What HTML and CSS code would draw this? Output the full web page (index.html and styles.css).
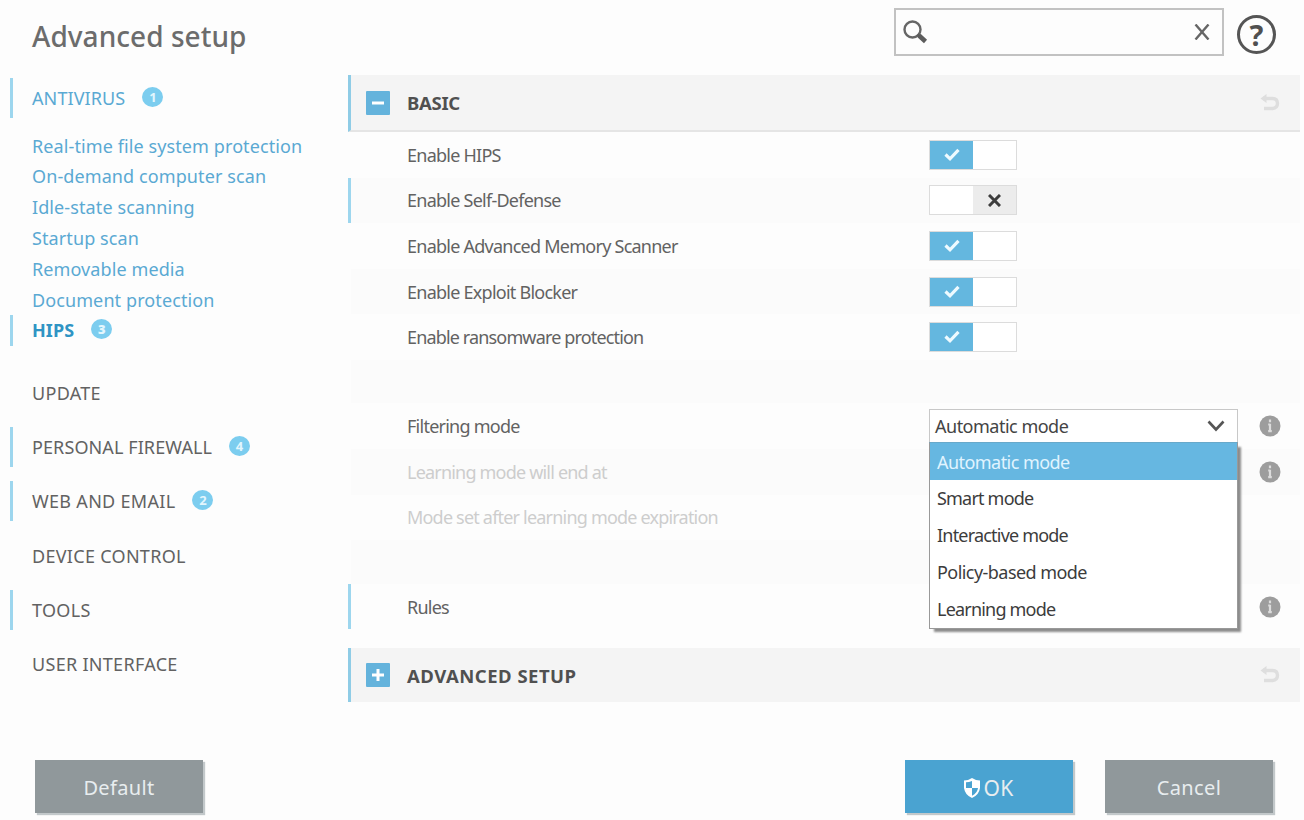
FILE: index.html
```html
<!DOCTYPE html>
<html lang="en">
<head>
<meta charset="utf-8">
<title>Advanced setup</title>
<link rel="stylesheet" href="styles.css">
</head>
<body>
<svg width="0" height="0" class="defs">
  <symbol id="check" viewBox="0 0 16 14"><path d="M1.500 6.500 6 10.800 14.500 1.800" fill="none" stroke="#eefaff" stroke-width="3.200"/></symbol>
  <symbol id="undo" viewBox="0 0 20 18"><path d="M3 4.500H12.500Q17.500 4.500 17.500 9.300T12.500 14.500H4" fill="none" stroke="#dedede" stroke-width="3.400"/><path d="M0.500 4.500 6.500 0V9Z" fill="#dedede"/></symbol>
  <symbol id="info" viewBox="0 0 22 22"><circle cx="11" cy="11" r="10.500" fill="#9d9d9d"/><path d="M11 4.500v2.800M11 8.800v7.500M9.200 9.500h1.800M9.200 16.200h3.600" stroke="#dcdcdc" stroke-width="2.200" fill="none"/></symbol>
</svg>
<div class="window">
  <header class="top">
    <h1 class="title">Advanced setup</h1>
    <div class="search">
      <svg width="26" height="26" viewBox="0 0 26 26"><circle cx="10.500" cy="10.500" r="8" fill="none" stroke="#666" stroke-width="2.400"/><path d="M15.500 15.500 18 18" stroke="#5c5c5c" stroke-width="3"/><path d="M17 16.500 23.500 22.500" stroke="#5c5c5c" stroke-width="4.600"/></svg>
      <svg width="16" height="16" viewBox="0 0 16 16"><path d="M1.500 0.500 14.500 15.500M14.500 0.500 1.500 15.500" stroke="#666" stroke-width="2.400"/></svg>
    </div>
    <div class="help"><span>?</span></div>
  </header>
  <div class="body">
    <nav class="side">
      <div class="cat tight active marked"><span>ANTIVIRUS</span><b class="badge">1</b></div>
      <div class="subs">
        <div class="sub">Real-time file system protection</div>
        <div class="sub">On-demand computer scan</div>
        <div class="sub">Idle-state scanning</div>
        <div class="sub">Startup scan</div>
        <div class="sub">Removable media</div>
        <div class="sub">Document protection</div>
        <div class="sub current marked"><span>HIPS</span><b class="badge">3</b></div>
      </div>
      <div class="cat">UPDATE</div>
      <div class="cat tight marked"><span>PERSONAL FIREWALL</span><b class="badge">4</b></div>
      <div class="cat marked"><span>WEB AND EMAIL</span><b class="badge">2</b></div>
      <div class="cat">DEVICE CONTROL</div>
      <div class="cat marked">TOOLS</div>
      <div class="cat">USER INTERFACE</div>
    </nav>
    <main class="main">
      <div class="section open">
        <svg width="24" height="24" viewBox="0 0 24 24"><rect width="24" height="24" rx="1" fill="#64b3dc"/><path d="M6 12H18" stroke="#fff" stroke-width="3"/></svg>
        <h2 class="short">BASIC</h2>
        <svg class="undo" width="20" height="18"><use href="#undo"/></svg>
      </div>
      <div class="row"><span class="label">Enable HIPS</span><span class="toggle on"><i><svg width="16" height="14"><use href="#check"/></svg></i><i></i></span></div>
      <div class="row alt changed"><span class="label">Enable Self-Defense</span><span class="toggle off"><i></i><i><svg width="13" height="13" viewBox="0 0 13 13"><path d="M1 1 12 12M12 1 1 12" stroke="#3c3c3c" stroke-width="3"/></svg></i></span></div>
      <div class="row"><span class="label">Enable Advanced Memory Scanner</span><span class="toggle on"><i><svg width="16" height="14"><use href="#check"/></svg></i><i></i></span></div>
      <div class="row alt"><span class="label">Enable Exploit Blocker</span><span class="toggle on"><i><svg width="16" height="14"><use href="#check"/></svg></i><i></i></span></div>
      <div class="row"><span class="label wide">Enable ransomware protection</span><span class="toggle on"><i><svg width="16" height="14"><use href="#check"/></svg></i><i></i></span></div>
      <div class="row alt spacer"></div>
      <div class="row">
        <span class="label">Filtering mode</span>
        <div class="select">
          <span>Automatic mode</span>
          <svg width="18" height="12" viewBox="0 0 18 12"><path d="M1.500 1.500 9 9.500 16.500 1.500" fill="none" stroke="#555" stroke-width="2.600"/></svg>
          <div class="menu">
            <div class="option selected">Automatic mode</div>
            <div class="option">Smart mode</div>
            <div class="option">Interactive mode</div>
            <div class="option roomy">Policy-based mode</div>
            <div class="option">Learning mode</div>
          </div>
        </div>
        <svg class="info" width="22" height="22"><use href="#info"/></svg>
      </div>
      <div class="row alt disabled"><span class="label">Learning mode will end at</span><svg class="info" width="22" height="22"><use href="#info"/></svg></div>
      <div class="row disabled"><span class="label">Mode set after learning mode expiration</span></div>
      <div class="row alt spacer"></div>
      <div class="row changed"><span class="label">Rules</span><svg class="info" width="22" height="22"><use href="#info"/></svg></div>
      <div class="section closed">
        <svg width="24" height="24" viewBox="0 0 24 24"><rect width="24" height="24" rx="1" fill="#64b3dc"/><path d="M6 12H18M12 6V18" stroke="#fff" stroke-width="3"/></svg>
        <h2>ADVANCED SETUP</h2>
        <svg class="undo" width="20" height="18"><use href="#undo"/></svg>
      </div>
    </main>
  </div>
  <footer class="foot">
    <button class="btn">Default</button>
    <button class="btn primary"><svg width="16" height="20" viewBox="0 0 16 20"><path d="M8 0Q12 2.500 16 2.500V10Q15 17 8 20 1 17 0 10V2.500Q4 2.500 8 0Z" fill="#fff"/><path d="M8 3V10H14Q13.500 15 8 17.800V10H2V4.200Q5 4.200 8 3Z" fill="#4aa3d1"/></svg><span>OK</span></button>
    <button class="btn">Cancel</button>
  </footer>
</div>
</body>
</html>
```
FILE: styles.css
```css
* { box-sizing: border-box; }
body { margin: 0; background: #fdfdfd; font-family: "Noto Sans", "Open Sans", sans-serif; font-size: 18px; color: #626262; letter-spacing: -0.5px; }
.defs { display: block; height: 0; }
.window { width: 1304px; height: 820px; overflow: hidden; display: flex; flex-direction: column; }
svg { flex: none; display: block; }
.top { height: 75px; flex: none; display: flex; align-items: flex-start; padding: 8px 28px 0 32px; }
.title { flex: 1; margin: 8px 0 0; font-size: 28px; line-height: 40px; font-weight: 500; color: #6c6c6c; letter-spacing: 0.05px; }
.search { width: 330px; height: 48px; border: 2px solid #c2c2c2; display: flex; align-items: center; justify-content: space-between; padding: 0 12px 1px 6px; }
.help { width: 39px; height: 39px; margin: 7px 0 0 13px; border: 3px solid #555; border-radius: 50%; display: flex; align-items: center; justify-content: center; font-size: 29px; font-weight: 700; line-height: 30px; color: #505050; letter-spacing: 0; }
.body { display: flex; height: 645px; flex: none; }
.side { width: 348px; padding: 3px 0 0 10px; display: flex; flex-direction: column; gap: 14.200px; }
.cat, .sub { display: flex; align-items: center; padding-left: 19px; border-left: 3px solid transparent; }
.cat { height: 40px; letter-spacing: 0.300px; }
.tight { letter-spacing: 0.100px; }
.active, .sub { color: #5aa9d3; }
.subs { padding: 0 0 13px; margin-top: -2px; }
.sub { height: 30.800px; letter-spacing: 0.100px; }
.marked { border-left-color: #9dd6ee; }
.current { color: #2f94c4; font-weight: 700; }
.badge { width: 21px; height: 20px; margin: -3px 0 0 17px; border-radius: 50%; background: #7ccdef; color: #e3f6fd; font-size: 13px; line-height: 20px; text-align: center; letter-spacing: 0; }
.main { width: 952px; }
.section { display: flex; align-items: center; padding: 0 20px 0 15px; border-left: 3px solid #8fcce6; background: #f4f4f4; }
.section h2 { flex: 1; margin: 0 0 0 17px; font-size: 18.500px; font-weight: 700; color: #505050; letter-spacing: 0.500px; }
.section .short { letter-spacing: -0.300px; }
.open { height: 57px; border-bottom: 2px solid #e5e5e5; }
.closed { height: 54px; margin-top: 19px; }
.row { height: 45.600px; display: flex; align-items: center; padding: 0 19px 0 56px; border-left: 3px solid transparent; }
.alt { background: #fbfbfb; background-clip: padding-box; }
.changed { border-left-color: #9dd6ee; }
.label { width: 522px; letter-spacing: -0.750px; }
.wide { letter-spacing: -0.850px; }
.spacer { height: 43.500px; }
.disabled { color: #cdcdcd; }
.disabled .label { letter-spacing: -0.800px; }
.toggle { width: 88px; height: 30px; display: flex; border: 1px solid #dcdcdc; background: #fff; }
.toggle i { flex: 1; display: flex; align-items: center; justify-content: center; }
.on i:first-child { background: #64b7df; }
.off i:last-child { background: #ececec; }
.select { position: relative; width: 309px; height: 34px; border: 1px solid #c8c8c8; background: #fff; display: flex; align-items: center; justify-content: space-between; padding: 0 12px 0 5px; color: #444; }
.info { margin-left: auto; }
.menu { position: absolute; left: -1px; top: 32px; width: 309px; height: 187px; border: 1px solid #999; border-top-color: #68a9ca; background: #fff; box-shadow: 4px 4px 2px -1px #8c8c8c; z-index: 1; }
.option { height: 36.800px; padding-left: 7px; display: flex; align-items: center; color: #3c3c3c; letter-spacing: -0.800px; }
.roomy, .selected { letter-spacing: -0.550px; }
.selected { background: #66b7e1; color: #e0f4ff; }
.foot { display: flex; flex: none; height: 100px; padding: 40px 31px 0 35px; }
.btn { width: 168px; height: 53px; padding: 2px 0 0; border: 0; background: #90989b; color: #e8edef; font: 20px "Noto Sans", sans-serif; letter-spacing: 0.350px; box-shadow: 2px 2px 1px #c2c8ca; display: flex; align-items: center; justify-content: center; gap: 3px; }
.primary { background: #4aa3d1; margin: 0 32px 0 auto; font-size: 21px; }
```
